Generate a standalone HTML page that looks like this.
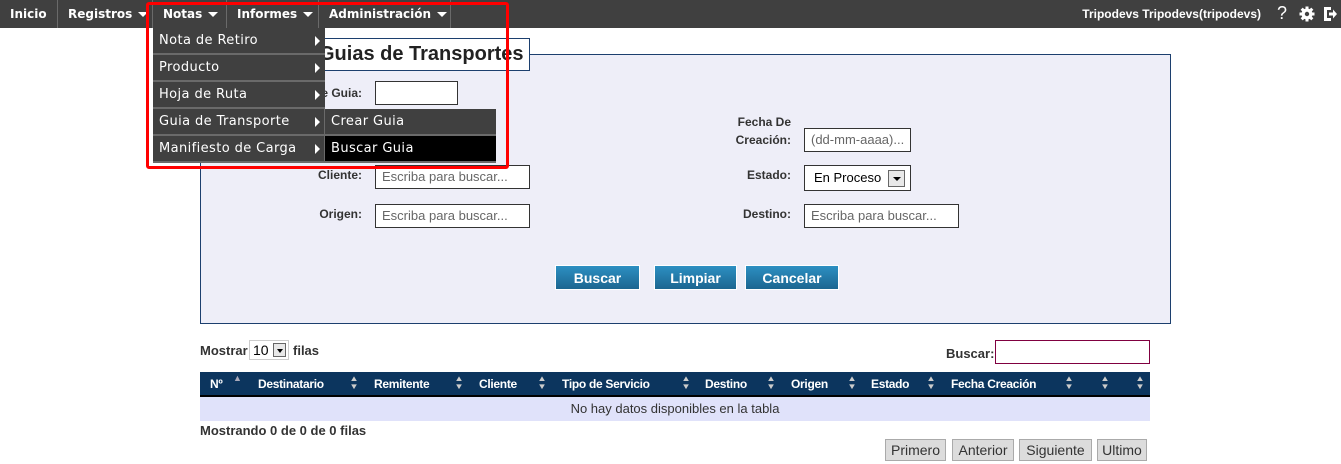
<!DOCTYPE html>
<html><head><meta charset="utf-8"><style>
*{margin:0;padding:0;box-sizing:border-box}
body{width:1341px;height:464px;background:#fff;position:relative;overflow:hidden;font-family:"Liberation Sans",Arial,sans-serif}
.a{position:absolute}
.nav{left:0;top:0;width:1341px;height:28px;background:#404040}
.ni{position:absolute;top:0;height:28px;color:#fff;font:bold 12px "DejaVu Sans",sans-serif;line-height:28px;padding-left:10px;border-right:1px solid #6a6a6a}
.car{display:inline-block;width:0;height:0;border-left:5px solid transparent;border-right:5px solid transparent;border-top:5px solid #fff;margin-left:6px;vertical-align:middle}
.mi{position:absolute;height:27px;color:#fff;font:13px "DejaVu Sans",sans-serif;line-height:26px;letter-spacing:0.4px;padding-left:6px;background:#404040;border-bottom:2px solid #6a6a6a}
.ra{position:absolute;right:5px;top:8px;width:0;height:0;border-top:5px solid transparent;border-bottom:5px solid transparent;border-left:5px solid #fff}
.lbl{position:absolute;font:bold 12px "Liberation Sans",sans-serif;color:#333;text-align:right}
.inp{position:absolute;background:#fff;border:1px solid #333;font:13px "Liberation Sans",sans-serif;line-height:22px;color:#666;padding-left:6px}
.btn{position:absolute;top:265px;height:25px;background:linear-gradient(#2c8fc2,#1c6690);color:#fff;font:bold 14px "Liberation Sans",sans-serif;line-height:24px;text-align:center;border:1px solid #fff}
.n{font-family:"Liberation Sans Narrow","Liberation Sans",sans-serif}
.th{position:absolute;top:377px;color:#fff;font:bold 12px "Liberation Sans Narrow","Liberation Sans",sans-serif;letter-spacing:-0.3px}
.so{position:absolute;top:375px;color:#ccc;font-size:8px;line-height:8px;width:10px;text-align:center;transform:scaleX(1.2)}
.pb{position:absolute;top:439px;height:22px;background:#dcdcdc;border:1px solid #aaa;font:14px "Liberation Sans Narrow","Liberation Sans",sans-serif;line-height:20px;color:#333;text-align:center}
</style></head><body>
<div class="a nav"></div>
<div class="ni" style="left:0;width:58px">Inicio</div>
<div class="ni" style="left:58px;width:95px">Registros<span class="car"></span></div>
<div class="ni" style="left:153px;width:74px">Notas<span class="car"></span></div>
<div class="ni" style="left:227px;width:92px">Informes<span class="car"></span></div>
<div class="ni" style="left:319px;width:132px">Administración<span class="car"></span></div>
<div class="a" style="right:80px;top:7px;color:#fff;font:bold 12px 'Liberation Sans',sans-serif">Tripodevs Tripodevs(tripodevs)</div>
<div class="a" style="left:1277px;top:3px;color:#fff;font:18px 'Liberation Sans',sans-serif">?</div>
<svg class="a" style="left:1299px;top:6px" width="16" height="16" viewBox="0 0 16 16"><g fill="#fff"><circle cx="8" cy="8" r="5.5"/><rect x="6.5" y="0.5" width="3" height="15"/><rect x="0.5" y="6.5" width="15" height="3"/><rect x="6.5" y="0.5" width="3" height="15" transform="rotate(45 8 8)"/><rect x="6.5" y="0.5" width="3" height="15" transform="rotate(-45 8 8)"/></g><circle cx="8" cy="8" r="2.2" fill="#404040"/></svg>
<svg class="a" style="left:1323px;top:6px" width="14" height="16" viewBox="0 0 14 16"><path d="M1 1h7v3H4v8h4v3H1z" fill="#fff"/><path d="M6 6.5h4V3.5l4 4.5-4 4.5v-3H6z" fill="#fff"/></svg>

<div class="a" style="left:200px;top:54px;width:971px;height:270px;background:#eeeef8;border:1px solid #1c3f6e"></div>
<div class="a" style="left:288px;top:38px;width:242px;height:33px;background:#fff;border:1px solid #1c3f6e;font:bold 20px 'Liberation Sans',sans-serif;color:#222;padding:4px 0 0 30px">Guias de Transportes</div>

<div class="lbl" style="left:300px;width:62px;top:86px">de Guia:</div>
<div class="inp" style="left:375px;top:81px;width:83px;height:24px"></div>
<div class="lbl" style="left:700px;width:91px;top:113px;line-height:18px">Fecha De<br>Creación:</div>
<div class="inp" style="left:804px;top:128px;width:107px;height:24px">(dd-mm-aaaa)...</div>
<div class="lbl" style="left:300px;width:62px;top:168px">Cliente:</div>
<div class="inp" style="left:375px;top:165px;width:155px;height:24px">Escriba para buscar...</div>
<div class="lbl" style="left:700px;width:91px;top:168px">Estado:</div>
<div class="inp" style="left:804px;top:165px;width:107px;height:26px;color:#000;padding-left:9px;line-height:24px">En Proceso</div>
<div class="a" style="left:888px;top:170px;width:17px;height:17px;background:#e8e8e8;border:1px solid #666"><div style="margin:6px auto 0;width:0;height:0;border-left:4px solid transparent;border-right:4px solid transparent;border-top:4px solid #000"></div></div>
<div class="lbl" style="left:300px;width:62px;top:207px">Origen:</div>
<div class="inp" style="left:375px;top:204px;width:155px;height:24px">Escriba para buscar...</div>
<div class="lbl" style="left:700px;width:91px;top:207px">Destino:</div>
<div class="inp" style="left:804px;top:204px;width:155px;height:24px">Escriba para buscar...</div>
<div class="btn" style="left:555px;width:85px">Buscar</div>
<div class="btn" style="left:654px;width:83px">Limpiar</div>
<div class="btn" style="left:745px;width:94px">Cancelar</div>

<div class="mi" style="left:153px;top:28px;width:172px">Nota de Retiro<span class="ra"></span></div>
<div class="mi" style="left:153px;top:55px;width:172px">Producto<span class="ra"></span></div>
<div class="mi" style="left:153px;top:82px;width:172px">Hoja de Ruta<span class="ra"></span></div>
<div class="mi" style="left:153px;top:109px;width:172px">Guia de Transporte<span class="ra"></span></div>
<div class="mi" style="left:153px;top:136px;width:172px">Manifiesto de Carga<span class="ra"></span></div>
<div class="mi" style="left:324px;top:109px;width:172px;border-left:1px solid #6a6a6a">Crear Guia</div>
<div class="mi" style="left:324px;top:136px;width:172px;background:#000;border-left:1px solid #6a6a6a">Buscar Guia</div>
<div class="a" style="left:146px;top:2px;width:363px;height:167px;border:3px solid #f00;border-radius:3px"></div>

<div class="a n" style="left:200px;top:343px;font-size:13px;color:#333;font-weight:bold">Mostrar</div>
<div class="a" style="left:249px;top:340px;width:40px;height:20px;background:#fff;border:1px solid #ccc;font:14px 'Liberation Sans Narrow',sans-serif;padding:1px 0 0 3px">10</div>
<div class="a" style="left:273px;top:343px;width:13px;height:14px;background:#e8e8e8;border:1px solid #666"><div style="margin:5px auto 0;width:0;height:0;border-left:3px solid transparent;border-right:3px solid transparent;border-top:4px solid #000"></div></div>
<div class="a n" style="left:293px;top:343px;font-size:13px;color:#333;font-weight:bold">filas</div>
<div class="a n" style="left:946px;top:346px;font-size:13px;color:#333;font-weight:bold">Buscar:</div>
<div class="a" style="left:995px;top:340px;width:155px;height:24px;border:1px solid #800040;background:#fff"></div>
<div class="a" style="left:200px;top:372px;width:950px;height:25px;background:#0c355e;border-bottom:2px solid #000"></div>
<div class="th" style="left:210px">Nº</div><div class="a" style="left:233px;top:373px;color:#aab;font-size:9px">▲</div>
<div class="th" style="left:258px">Destinatario</div>
<div class="th" style="left:374px">Remitente</div>
<div class="th" style="left:479px">Cliente</div>
<div class="th" style="left:562px">Tipo de Servicio</div>
<div class="th" style="left:705px">Destino</div>
<div class="th" style="left:791px">Origen</div>
<div class="th" style="left:871px">Estado</div>
<div class="th" style="left:951px">Fecha Creación</div>
<div class="so" style="left:349px">▲<br>▼</div><div class="so" style="left:454px">▲<br>▼</div><div class="so" style="left:537px">▲<br>▼</div><div class="so" style="left:681px">▲<br>▼</div><div class="so" style="left:766px">▲<br>▼</div><div class="so" style="left:847px">▲<br>▼</div><div class="so" style="left:926px">▲<br>▼</div><div class="so" style="left:1064px">▲<br>▼</div><div class="so" style="left:1100px">▲<br>▼</div><div class="so" style="left:1135px">▲<br>▼</div>
<div class="a n" style="left:200px;top:397px;width:950px;height:24px;background:#e0e2fa;text-align:center;font-size:13px;line-height:24px;color:#333">No hay datos disponibles en la tabla</div>
<div class="a n" style="left:200px;top:423px;font-size:13px;color:#333;font-weight:bold">Mostrando 0 de 0 de 0 filas</div>
<div class="pb" style="left:885px;width:61px">Primero</div>
<div class="pb" style="left:952px;width:62px">Anterior</div>
<div class="pb" style="left:1019px;width:73px">Siguiente</div>
<div class="pb" style="left:1097px;width:50px">Ultimo</div>
</body></html>
